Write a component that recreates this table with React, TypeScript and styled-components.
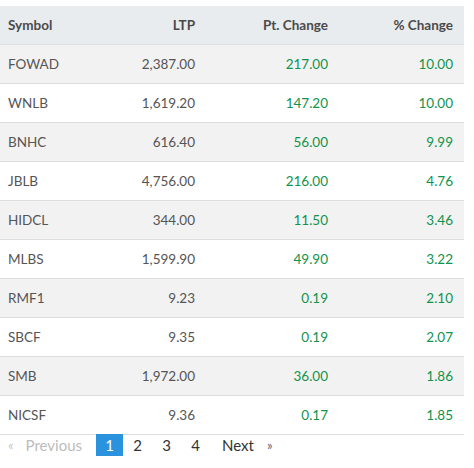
import React from "react";
import styled, { createGlobalStyle } from "styled-components";

const Global = createGlobalStyle`
  html, body { margin: 0; padding: 0; background: #fff; }
  body { font-family: Lato, "Noto Sans", sans-serif; }
`;

const Wrap = styled.div`
  width: 464px;
  padding-top: 6px;
`;

const Table = styled.table`
  width: 464px;
  border-collapse: collapse;
  table-layout: fixed;
  font-size: 13.5px;
`;

const Th = styled.th<{ $w: number; $align?: string }>`
  width: ${(p) => p.$w}px;
  text-align: ${(p) => p.$align || "right"};
  background: #e9ecef;
  color: #4a4a4a;
  font-weight: 700;
  height: 38px;
  padding-top: 0;
  padding-bottom: 0;
  padding-left: ${(p) => (p.$align === "left" ? 8 : 0)}px;
  padding-right: ${(p) => (p.$align === "left" ? 0 : 11)}px;
  box-sizing: border-box;
  border-bottom: 1px solid #dcdfe2;
`;

const Tr = styled.tr<{ $odd: boolean }>`
  background: ${(p) => (p.$odd ? "#f2f2f2" : "#ffffff")};
  border-bottom: 1px solid #dddddd;
`;

const Td = styled.td<{ $align?: string; $green?: boolean }>`
  height: 39px;
  box-sizing: border-box;
  text-align: ${(p) => p.$align || "right"};
  padding-left: ${(p) => (p.$align === "left" ? 8 : 0)}px;
  padding-right: ${(p) => (p.$align === "left" ? 0 : 11)}px;
  color: ${(p) => (p.$green ? "#11934c" : "#555555")};
`;

const Pager = styled.div`
  display: flex;
  align-items: center;
  height: 22px;
  font-size: 15px;
  margin-top: -1px;
  padding-left: 8px;
`;

const PageItem = styled.span<{ $active?: boolean; $muted?: boolean; $w?: number }>`
  display: inline-flex;
  align-items: center;
  justify-content: center;
  height: 22px;
  min-width: ${(p) => p.$w || 0}px;
  background: ${(p) => (p.$active ? "#2b93dd" : "transparent")};
  color: ${(p) => (p.$active ? "#fff" : p.$muted ? "#bcbcbc" : "#333")};
`;

const Label = styled(PageItem)<{ $ml: number; $mr: number }>`
  margin-left: ${(p) => p.$ml}px;
  margin-right: ${(p) => p.$mr}px;
`;

const Arrow = styled.span<{ $muted?: boolean }>`
  color: ${(p) => (p.$muted ? "#c8c8c8" : "#6a6478")};
  font-size: 13px;
`;

const rows = [
  ["FOWAD", "2,387.00", "217.00", "10.00"],
  ["WNLB", "1,619.20", "147.20", "10.00"],
  ["BNHC", "616.40", "56.00", "9.99"],
  ["JBLB", "4,756.00", "216.00", "4.76"],
  ["HIDCL", "344.00", "11.50", "3.46"],
  ["MLBS", "1,599.90", "49.90", "3.22"],
  ["RMF1", "9.23", "0.19", "2.10"],
  ["SBCF", "9.35", "0.19", "2.07"],
  ["SMB", "1,972.00", "36.00", "1.86"],
  ["NICSF", "9.36", "0.17", "1.85"],
];

export default function App() {
  return (
    <Wrap>
      <Global />
      <Table>
        <thead>
          <tr>
            <Th $w={100} $align="left">Symbol</Th>
            <Th $w={106}>LTP</Th>
            <Th $w={133}>Pt. Change</Th>
            <Th $w={125}>% Change</Th>
          </tr>
        </thead>
        <tbody>
          {rows.map((r, i) => (
            <Tr key={r[0]} $odd={i % 2 === 0}>
              <Td $align="left">{r[0]}</Td>
              <Td>{r[1]}</Td>
              <Td $green>{r[2]}</Td>
              <Td $green>{r[3]}</Td>
            </Tr>
          ))}
        </tbody>
      </Table>
      <Pager>
        <Arrow $muted>«</Arrow>
        <Label $muted $ml={12} $mr={14}>Previous</Label>
        <PageItem $active $w={27}>1</PageItem>
        <PageItem $w={29}>2</PageItem>
        <PageItem $w={29}>3</PageItem>
        <PageItem $w={29}>4</PageItem>
        <Label $ml={12} $mr={13}>Next</Label>
        <Arrow>»</Arrow>
      </Pager>
    </Wrap>
  );
}
